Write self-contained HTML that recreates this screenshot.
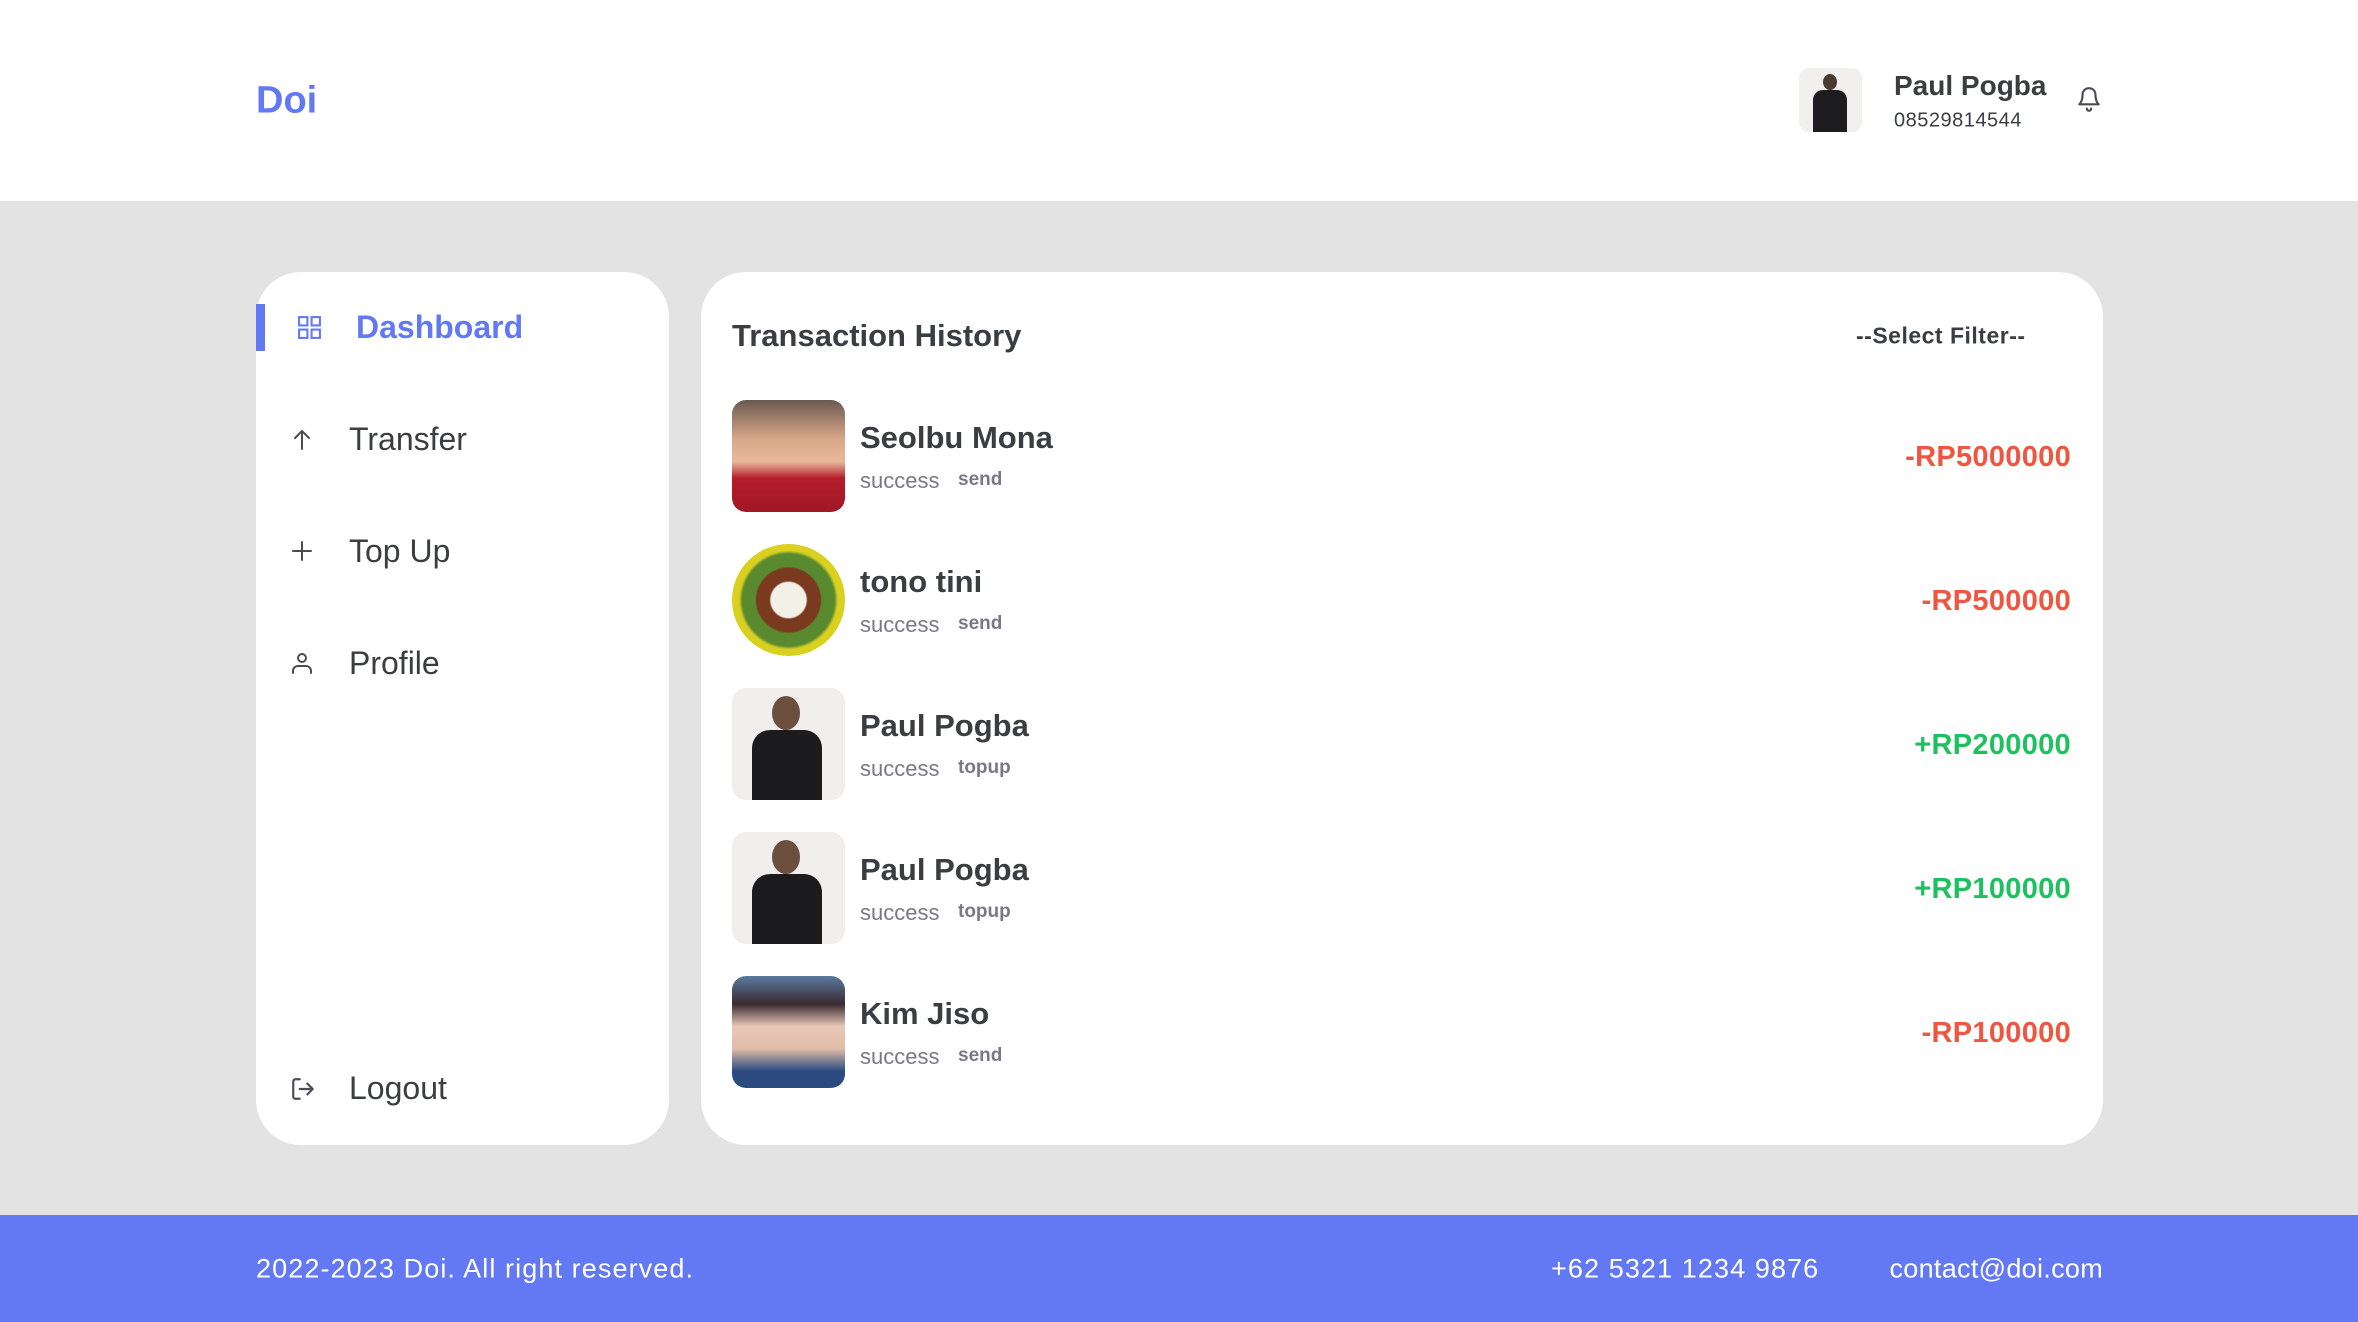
<!DOCTYPE html>
<html><head><meta charset="utf-8"><style>
*{margin:0;padding:0;box-sizing:border-box}
body{width:2358px;height:1322px;background:#e3e3e3;font-family:"Liberation Sans",sans-serif;position:relative;overflow:hidden;color:#3a3d42}
.abs{position:absolute}
header{position:absolute;left:0;top:0;width:2358px;height:201px;background:#fff}
.card{position:absolute;background:#fff;border-radius:45px}
.nav{position:absolute;left:349px;font-size:32px;color:#3a3d42;transform:translateY(-48%)}
.row .av{position:absolute;left:732px;width:113px;height:112px;border-radius:14px;overflow:hidden}
.name{position:absolute;left:860px;font-size:31px;font-weight:bold;color:#3a3d42;transform:translateY(-47%)}
.st{position:absolute;left:860px;font-size:22px;color:#7a7886;transform:translateY(-47%)}
.tg{position:absolute;left:958px;font-size:19px;font-weight:bold;color:#7a7886;transform:translateY(-45%)}
.amt{position:absolute;right:287px;font-size:29px;font-weight:bold;transform:translateY(-46%);letter-spacing:0.3px}
.red{color:#f0553f}.green{color:#1ec15f}
footer{position:absolute;left:0;top:1215px;width:2358px;height:107px;background:#6379f4;color:#fff;font-size:27px;letter-spacing:1.1px}
footer span{position:absolute;top:54px;transform:translateY(-50%)}
</style></head><body>
<header>
<div class="abs" style="left:256px;top:101px;transform:translateY(-50%);font-size:38px;font-weight:bold;color:#6379f4">Doi</div>
<div class="abs" style="left:1799px;top:68px;width:63px;height:64px;border-radius:10px;background:#f2f0ee;overflow:hidden">
<div class="abs" style="left:24px;top:6px;width:14px;height:16px;border-radius:50%;background:#4a3a30"></div>
<div class="abs" style="left:14px;top:22px;width:34px;height:42px;border-radius:10px 10px 0 0;background:#1d1d1f"></div>
</div>
<div class="abs" style="left:1894px;top:86px;transform:translateY(-50%);font-size:28px;font-weight:bold;color:#3a3d42">Paul Pogba</div>
<div class="abs" style="left:1894px;top:121px;transform:translateY(-50%);font-size:20px;color:#3a3d42;letter-spacing:0.5px">08529814544</div>
<svg class="abs" style="left:2076px;top:86px" width="26" height="28" viewBox="0 0 24 26" fill="none" stroke="#4d4b57" stroke-width="2" stroke-linecap="round" stroke-linejoin="round"><path d="M18 8A6 6 0 0 0 6 8c0 7-3 9-3 9h18s-3-2-3-9"/><path d="M10 21a2 2 0 0 0 4 0"/></svg>
</header>

<div class="card" style="left:256px;top:272px;width:413px;height:873px"></div>
<div class="abs" style="left:256px;top:304px;width:9px;height:47px;background:#6379f4"></div>
<svg class="abs" style="left:297px;top:315px" width="25" height="25" viewBox="0 0 24 24" fill="none" stroke="#6379f4" stroke-width="2"><rect x="2" y="2" width="8" height="8"/><rect x="14" y="2" width="8" height="8"/><rect x="2" y="14" width="8" height="8"/><rect x="14" y="14" width="8" height="8"/></svg>
<div class="nav" style="left:356px;top:327px;font-weight:bold;color:#6379f4">Dashboard</div>
<svg class="abs" style="left:290px;top:428px" width="24" height="24" viewBox="0 0 24 24" fill="none" stroke="#4d4b57" stroke-width="2" stroke-linecap="round"><path d="M12 21V3M5 10l7-7 7 7"/></svg>
<div class="nav" style="top:439px">Transfer</div>
<svg class="abs" style="left:290px;top:539px" width="24" height="24" viewBox="0 0 24 24" fill="none" stroke="#4d4b57" stroke-width="2" stroke-linecap="round"><path d="M12 3v18M3 12h18"/></svg>
<div class="nav" style="top:551px">Top Up</div>
<svg class="abs" style="left:290px;top:651px" width="24" height="24" viewBox="0 0 24 24" fill="none" stroke="#4d4b57" stroke-width="2" stroke-linecap="round"><circle cx="12" cy="7" r="4"/><path d="M3 22v-2a5 5 0 0 1 5-5h8a5 5 0 0 1 5 5v2"/></svg>
<div class="nav" style="top:663px">Profile</div>
<svg class="abs" style="left:290px;top:1076px" width="26" height="26" viewBox="0 0 24 24" fill="none" stroke="#4d4b57" stroke-width="2" stroke-linecap="round" stroke-linejoin="round"><path d="M9 21H5a2 2 0 0 1-2-2V5a2 2 0 0 1 2-2h4M16 17l5-5-5-5M21 12H9"/></svg>
<div class="nav" style="top:1088px">Logout</div>

<div class="card" style="left:701px;top:272px;width:1402px;height:873px"></div>
<div class="abs" style="left:732px;top:336px;transform:translateY(-50%);font-size:31px;font-weight:bold;color:#3a3d42">Transaction History</div>
<div class="abs" style="left:1856px;top:336px;transform:translateY(-50%);font-size:23px;font-weight:bold;color:#3a3d42;letter-spacing:0.5px">--Select Filter--</div>

<div class="row">
<div class="av" style="top:400px;background:linear-gradient(#6a5a50 0,#d9a88a 35%,#e8b89c 55%,#b51c2a 70%,#a01826 100%)"></div>
<div class="name" style="top:437px">Seolbu Mona</div><div class="st" style="top:480px">success</div><div class="tg" style="top:479px">send</div>
<div class="amt red" style="top:456px">-RP5000000</div>

<div class="av" style="top:544px;border-radius:50%;background:radial-gradient(circle,#f3f0e8 0 22%,#7a3a20 24% 40%,#5a8a30 42% 58%,#d9d020 62% 100%)"></div>
<div class="name" style="top:581px">tono tini</div><div class="st" style="top:624px">success</div><div class="tg" style="top:623px">send</div>
<div class="amt red" style="top:600px">-RP500000</div>

<div class="av" style="top:688px;background:#f1efed"><div class="abs" style="left:40px;top:8px;width:28px;height:34px;border-radius:50%;background:#6b4e3d"></div><div class="abs" style="left:20px;top:42px;width:70px;height:70px;border-radius:18px 18px 0 0;background:#1c1c1e"></div></div>
<div class="name" style="top:725px">Paul Pogba</div><div class="st" style="top:768px">success</div><div class="tg" style="top:767px">topup</div>
<div class="amt green" style="top:744px">+RP200000</div>

<div class="av" style="top:832px;background:#f1efed"><div class="abs" style="left:40px;top:8px;width:28px;height:34px;border-radius:50%;background:#6b4e3d"></div><div class="abs" style="left:20px;top:42px;width:70px;height:70px;border-radius:18px 18px 0 0;background:#1c1c1e"></div></div>
<div class="name" style="top:869px">Paul Pogba</div><div class="st" style="top:912px">success</div><div class="tg" style="top:911px">topup</div>
<div class="amt green" style="top:888px">+RP100000</div>

<div class="av" style="top:976px;background:linear-gradient(#5a7aa0 0,#3a2a30 25%,#e8c8b8 45%,#e0bca8 65%,#2a4a80 85%,#2a4a80 100%)"></div>
<div class="name" style="top:1013px">Kim Jiso</div><div class="st" style="top:1056px">success</div><div class="tg" style="top:1055px">send</div>
<div class="amt red" style="top:1032px">-RP100000</div>
</div>

<footer>
<span style="left:256px">2022-2023 Doi. All right reserved.</span>
<span style="left:1551px">+62 5321 1234 9876</span>
<span style="right:255px;letter-spacing:0.3px">contact@doi.com</span>
</footer>
</body></html>
